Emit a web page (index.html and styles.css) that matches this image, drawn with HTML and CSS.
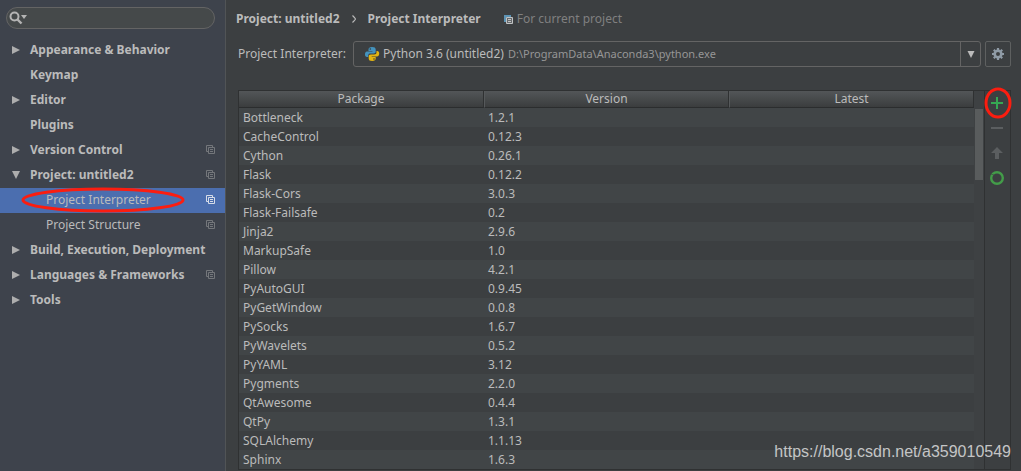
FILE: index.html
```html
<!DOCTYPE html>
<html lang="en">
<head>
<meta charset="utf-8">
<title>Settings - Project Interpreter</title>
<link rel="stylesheet" href="styles.css">
</head>
<body>
<svg class="defs" aria-hidden="true">
  <symbol id="copy" viewBox="0 0 9 9"><path d="M2.5 6.5H.5v-6h6v2M2.5 2.5h6v6h-6zM4 4.5h3M4 6.5h3" fill="none" stroke="currentColor"/></symbol>
  <symbol id="right" viewBox="0 0 8 8"><path d="M0 0l8 4-8 4z" fill="currentColor"/></symbol>
  <symbol id="down" viewBox="0 0 8 8"><path d="M0 0h8L4 8z" fill="currentColor"/></symbol>
</svg>
<div class="settings">
  <aside class="sidebar">
    <label class="search">
      <svg class="search-icon" viewBox="0 0 19 14" aria-hidden="true"><circle cx="5.5" cy="5.5" r="4" fill="none" stroke="currentColor" stroke-width="2"/><path d="M8.5 8.5l4 4" stroke="currentColor" stroke-width="2.4"/><path d="M12 4h6l-3 4z" fill="currentColor"/></svg>
      <input class="search-input" type="text" aria-label="Search settings">
    </label>
    <nav class="tree">
      <a class="node" href="#"><svg class="arrow"><use href="#right"/></svg><span class="name">Appearance &amp; Behavior</span></a>
      <a class="node" href="#"><span class="arrow"></span><span class="name">Keymap</span></a>
      <a class="node" href="#"><svg class="arrow"><use href="#right"/></svg><span class="name">Editor</span></a>
      <a class="node" href="#"><span class="arrow"></span><span class="name">Plugins</span></a>
      <a class="node" href="#"><svg class="arrow"><use href="#right"/></svg><span class="name">Version Control</span><svg class="copy"><use href="#copy"/></svg></a>
      <a class="node" href="#"><svg class="arrow"><use href="#down"/></svg><span class="name">Project: untitled2</span><svg class="copy"><use href="#copy"/></svg></a>
      <a class="node child selected" href="#"><span class="name">Project Interpreter</span><svg class="copy"><use href="#copy"/></svg><svg class="mark mark-wide" viewBox="0 0 164 26" aria-hidden="true"><ellipse cx="82" cy="13" rx="80" ry="11" /></svg></a>
      <a class="node child" href="#"><span class="name">Project Structure</span><svg class="copy"><use href="#copy"/></svg></a>
      <a class="node" href="#"><svg class="arrow"><use href="#right"/></svg><span class="name">Build, Execution, Deployment</span></a>
      <a class="node" href="#"><svg class="arrow"><use href="#right"/></svg><span class="name">Languages &amp; Frameworks</span><svg class="copy"><use href="#copy"/></svg></a>
      <a class="node" href="#"><svg class="arrow"><use href="#right"/></svg><span class="name">Tools</span></a>
    </nav>
  </aside>
  <main class="content">
    <header class="crumbs">
      <span>Project: untitled2</span>
      <svg class="chevron" viewBox="0 0 4 8" aria-hidden="true"><path d="M.5.5q3 3 3 3.500t-3 3.500" fill="none" stroke="currentColor" stroke-width="1.200"/></svg>
      <span>Project Interpreter</span>
      <span class="scope"><svg class="scope-icon" viewBox="0 0 9 9" aria-hidden="true"><path d="M0 0h7v2H2v5H0z" fill="#5d94b5"/><path d="M2.500 2.500h6v6h-6z" fill="#676a6c" stroke="#c0c2c3"/><path d="M4 4.500h3M4 6.500h3" stroke="#c0c2c3"/></svg>For current project</span>
    </header>
    <div class="interpreter">
      <label class="caption" for="interpreter">Project Interpreter:</label>
      <div class="combo">
        <svg class="python" viewBox="0 0 16 16" aria-hidden="true"><path d="M8 1C5.500 1 4.500 2 4.500 3.500V5h4v.6H3C1.500 5.600 1 7 1 8.500S1.700 11 3 11h1.200V9.500C4.200 8 5 7.400 6.500 7.400h3.300c1.200 0 1.900-.7 1.900-1.900v-2C11.700 1.800 10.500 1 8 1z" fill="#4493bd"/><path d="M8.200 15c2.500 0 3.500-1 3.500-2.500V11h-4v-.6h5.500c1.500 0 2-1.300 2-2.800S14.500 5 13.200 5H12.500v1.300c0 1.500-.8 2.200-2.300 2.200H6.700c-1.300 0-2 .7-2 2v2C4.700 14.200 5.800 15 8.200 15z" fill="#e2b512"/><circle cx="6.300" cy="3" r=".8" fill="#303c43"/><circle cx="10" cy="13" r=".8" fill="#55450f"/></svg>
        <select class="combo-select" id="interpreter"><option>Python 3.6 (untitled2)</option></select>
        <span class="path">D:\ProgramData\Anaconda3\python.exe</span>
        <span class="combo-arrow"><svg class="drop"><use href="#down"/></svg></span>
      </div>
      <button class="gear" type="button" aria-label="Interpreter options"><svg class="gear-icon" viewBox="0 0 12 12" aria-hidden="true"><circle cx="6" cy="6" r="3.300" fill="none" stroke="currentColor" stroke-width="2.600"/><path d="M6 0v2M6 10v2M0 6h2M10 6h2M1.800 1.800l1.400 1.400M8.800 8.800l1.400 1.400M1.800 10.200l1.400-1.400M8.800 3.200l1.400-1.400" stroke="currentColor" stroke-width="2.200"/></svg></button>
    </div>
    <section class="packages">
      <table class="table">
        <thead><tr><th>Package</th><th>Version</th><th>Latest</th></tr></thead>
        <tbody>
          <tr><td>Bottleneck</td><td>1.2.1</td><td></td></tr>
          <tr><td>CacheControl</td><td>0.12.3</td><td></td></tr>
          <tr><td>Cython</td><td>0.26.1</td><td></td></tr>
          <tr><td>Flask</td><td>0.12.2</td><td></td></tr>
          <tr><td>Flask-Cors</td><td>3.0.3</td><td></td></tr>
          <tr><td>Flask-Failsafe</td><td>0.2</td><td></td></tr>
          <tr><td>Jinja2</td><td>2.9.6</td><td></td></tr>
          <tr><td>MarkupSafe</td><td>1.0</td><td></td></tr>
          <tr><td>Pillow</td><td>4.2.1</td><td></td></tr>
          <tr><td>PyAutoGUI</td><td>0.9.45</td><td></td></tr>
          <tr><td>PyGetWindow</td><td>0.0.8</td><td></td></tr>
          <tr><td>PySocks</td><td>1.6.7</td><td></td></tr>
          <tr><td>PyWavelets</td><td>0.5.2</td><td></td></tr>
          <tr><td>PyYAML</td><td>3.12</td><td></td></tr>
          <tr><td>Pygments</td><td>2.2.0</td><td></td></tr>
          <tr><td>QtAwesome</td><td>0.4.4</td><td></td></tr>
          <tr><td>QtPy</td><td>1.3.1</td><td></td></tr>
          <tr><td>SQLAlchemy</td><td>1.1.13</td><td></td></tr>
          <tr><td>Sphinx</td><td>1.6.3</td><td></td></tr>
        </tbody>
      </table>
      <div class="scrollbar"><div class="thumb"></div></div>
      <div class="tools">
        <button class="tool add" type="button" aria-label="Install"><svg class="tool-icon" viewBox="0 0 14 14"><path d="M7 1v12M1 7h12" stroke="currentColor" stroke-width="2"/></svg><svg class="mark mark-round" viewBox="0 0 28 32" aria-hidden="true"><ellipse cx="14" cy="16" rx="12" ry="14"/></svg></button>
        <button class="tool" type="button" aria-label="Uninstall"><svg class="tool-icon" viewBox="0 0 14 14"><path d="M1 7h12" stroke="currentColor" stroke-width="2"/></svg></button>
        <button class="tool" type="button" aria-label="Upgrade"><svg class="tool-icon" viewBox="0 0 14 14"><path d="M7 1l6 6H9v6H5V7H1z" fill="currentColor"/></svg></button>
        <button class="tool refresh" type="button" aria-label="Show early releases"><svg class="tool-icon" viewBox="0 0 14 14"><circle cx="7" cy="7" r="5.800" fill="none" stroke="currentColor" stroke-width="2.400"/><path d="M1 3l3 1" stroke="#3c3f41" stroke-width=".6"/></svg></button>
      </div>
    </section>
  </main>
  <span class="watermark">https://blog.csdn.net/a359010549</span>
</div>
</body>
</html>
```
FILE: styles.css
```css
* { box-sizing: border-box; }

body {
  margin: 0;
  background: #3c3f41;
  color: #bbbbbb;
  font: 12px/18px "Noto Sans", "Open Sans", sans-serif;
}

svg { display: block; flex: none; }
.defs { display: none; }

.settings {
  position: relative;
  display: flex;
  min-height: 100vh;
}

/* Sidebar */
.sidebar {
  flex: none;
  width: 226px;
  padding-top: 7px;
  background: #3e434c;
  border-right: 1px solid #515456;
}

.search {
  display: flex;
  align-items: center;
  gap: 4px;
  height: 22px;
  margin: 0 10px 9px 6px;
  padding: 0 8px 0 2px;
  border: 1px solid #646464;
  border-radius: 11px;
  background: #45494a;
}

.search-icon { width: 19px; height: 14px; color: #b4b4b4; }

.search-input {
  flex: 1;
  min-width: 0;
  border: 0;
  outline: 0;
  background: none;
  color: inherit;
  font: inherit;
}

.node {
  position: relative;
  display: flex;
  align-items: center;
  height: 25px;
  padding: 0 10px 2px 12px;
  color: inherit;
  font-weight: 700;
  text-decoration: none;
  white-space: nowrap;
}

.name { flex: 1; }
.arrow { flex: none; width: 8px; height: 8px; margin-right: 10px; color: #adadad; }
.copy { width: 9px; height: 9px; color: #74777b; }
.child { padding-left: 46px; font-weight: 400; }
.selected { background: #4b6eaf; }
.selected .copy { color: #d6dce8; }

/* Hand-drawn highlights */
.mark {
  position: absolute;
  z-index: 1;
  fill: none;
  stroke: #fb1d10;
  stroke-width: 3;
  pointer-events: none;
}

.mark-wide { top: -1px; left: 21px; width: 164px; height: 26px; }
.mark-round { top: -4px; left: -1px; width: 28px; height: 32px; }

/* Content */
.content {
  flex: 1;
  min-width: 0;
  display: flex;
  flex-direction: column;
  padding: 10px 10px 0 12px;
}

.crumbs {
  display: flex;
  align-items: center;
  gap: 12px;
  margin-left: -2px;
  font-weight: 700;
}

.chevron { width: 4px; height: 8px; }

.scope {
  display: flex;
  align-items: center;
  gap: 4px;
  margin-left: 11px;
  color: #808080;
  font-weight: 400;
}

.scope-icon { width: 9px; height: 9px; }

.interpreter {
  display: flex;
  align-items: center;
  gap: 4px;
  margin: 13px 0 23px;
}

.caption { margin-right: 3px; }

.combo {
  flex: 1;
  display: flex;
  align-items: center;
  height: 26px;
  padding-left: 10px;
  border: 1px solid #646464;
  border-radius: 3px;
}

.python { width: 16px; height: 16px; margin-right: 3px; }

.combo-select {
  appearance: none;
  padding: 0;
  border: 0;
  background: none;
  color: inherit;
  font: inherit;
}

.path { flex: 1; margin-left: 4px; color: #969696; font-size: 11px; }

.combo-arrow {
  display: grid;
  place-items: center;
  align-self: stretch;
  width: 20px;
  border-left: 1px solid #646464;
}

.drop { width: 8px; height: 7px; }

.gear {
  display: grid;
  place-items: center;
  width: 26px;
  height: 26px;
  padding: 0;
  border: 1px solid #5e6060;
  border-radius: 2px;
  background: none;
  color: #8f9ba6;
}

.gear-icon { width: 12px; height: 12px; }

/* Package table */
.packages {
  display: grid;
  grid-template-columns: 1fr 10px 26px;
  border: 1px solid #2f3132;
}

.table {
  width: 100%;
  border-collapse: separate;
  border-spacing: 0;
  table-layout: fixed;
}

.table th {
  height: 17px;
  padding: 0;
  border-right: 1px solid #2f3132;
  border-bottom: 1px solid #2b2d2e;
  background: linear-gradient(#535658, #3b3d3e);
  font-weight: 400;
  line-height: 16px;
}

.table th + th { border-left: 1px solid #56595b; }

.table td { height: 19px; padding: 0 4px; line-height: 19px; }
.table tbody tr:nth-child(odd) { background: #414547; }

.scrollbar { padding: 18px 1px 0; background: #3e4143; }
.thumb { height: 71px; background: #595c5d; }

.tools { border-left: 1px solid #2f3132; }

.tool {
  position: relative;
  display: grid;
  place-items: center;
  width: 24px;
  height: 25px;
  padding: 0 0 1px;
  border: 0;
  background: none;
  color: #5b5e60;
}

.tool-icon { width: 14px; height: 14px; }
.add { color: #35a853; }
.refresh { color: #439c49; }

.watermark {
  position: absolute;
  right: 10px;
  bottom: 10px;
  color: #c4c5c6;
  font: 16px/18px "Liberation Sans", Arial, sans-serif;
}
```
